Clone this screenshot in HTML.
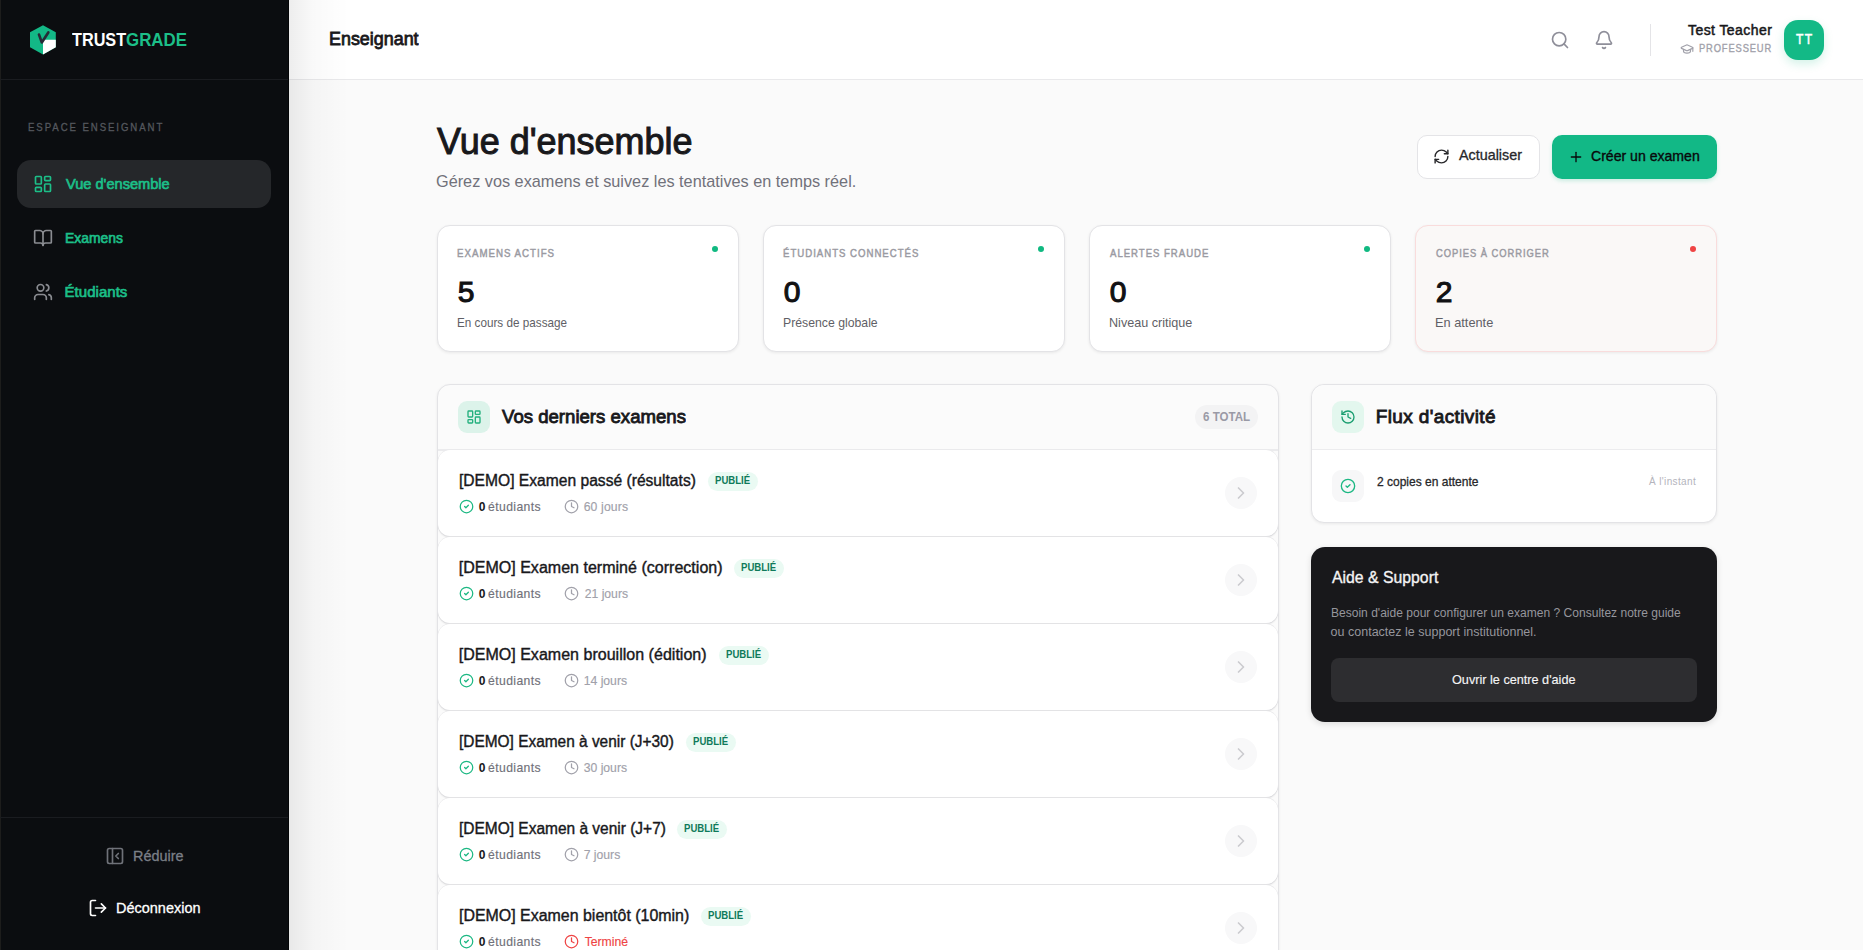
<!DOCTYPE html>
<html lang="fr"><head><meta charset="utf-8"><title>TrustGrade</title><style>*{box-sizing:border-box;margin:0;padding:0}
html,body{width:1863px;height:950px;overflow:hidden}
body{font-family:"Liberation Sans",sans-serif;background:#fafafa;position:relative}
.a{position:absolute}
svg{display:block;overflow:visible}
.t{position:absolute;white-space:nowrap;font-family:"Liberation Sans",sans-serif}
#side{position:absolute;left:0;top:0;width:289px;height:950px;background:#0b0d10}
.card{border:1px solid #e3e3e6;border-radius:13px;background:#fff;box-shadow:0 1px 3px rgba(0,0,0,0.07)}
.row{background:#fff;border-radius:12px;box-shadow:0 1px 0 #dcdcdf, 0 1.5px 1.5px rgba(0,0,0,0.06), 0 0 0 0.5px #e9e9eb}
</style></head>
<body>
<div id="side"></div>
<div class="a" style="left:0;top:0;width:1px;height:950px;background:#1d1d1c"></div>
<div class="a" style="left:0;top:79px;width:288px;height:1px;background:#1a1c20"></div>
<div class="a" style="left:0;top:817px;width:288px;height:1px;background:#1a1c20"></div>
<div class="a" style="left:288px;top:0;width:1px;height:950px;background:#040507"></div>
<svg class="a" style="left:29px;top:24px" width="28" height="32" viewBox="0 0 28 32">
<polygon points="14,1.2 26.8,8.2 26.8,23.2 14,30.5 1,23.2 1,8.2" fill="#13b886"/>
<polygon points="14,15.8 26.8,15.8 26.8,23.2 14,30.5" fill="#ffffff"/>
<path d="M10 10.6 L12.8 18.4 L19.3 8.5" stroke="#262b37" stroke-width="2.7" fill="none" stroke-linecap="round" stroke-linejoin="round"/>
</svg>
<div class="a" style="left:17px;top:160px;width:254px;height:48px;border-radius:14px;background:#25272a"></div>
<svg class="a" style="left:33px;top:174px" width="20" height="20" viewBox="0 0 24 24" fill="none" stroke="#1cbf88" stroke-width="2" stroke-linecap="round" stroke-linejoin="round"><rect width="7" height="9" x="3" y="3" rx="1"/><rect width="7" height="5" x="14" y="3" rx="1"/><rect width="7" height="9" x="14" y="12" rx="1"/><rect width="7" height="5" x="3" y="16" rx="1"/></svg>
<svg class="a" style="left:33px;top:228px" width="20" height="20" viewBox="0 0 24 24" fill="none" stroke="#8a8c91" stroke-width="2" stroke-linecap="round" stroke-linejoin="round"><path d="M12 7v14"/><path d="M3 18a1 1 0 0 1-1-1V4a1 1 0 0 1 1-1h5a4 4 0 0 1 4 4 4 4 0 0 1 4-4h5a1 1 0 0 1 1 1v13a1 1 0 0 1-1 1h-6a3 3 0 0 0-3 3 3 3 0 0 0-3-3z"/></svg>
<svg class="a" style="left:33px;top:282px" width="20" height="20" viewBox="0 0 24 24" fill="none" stroke="#8a8c91" stroke-width="2" stroke-linecap="round" stroke-linejoin="round"><path d="M16 21v-2a4 4 0 0 0-4-4H6a4 4 0 0 0-4 4v2"/><circle cx="9" cy="7" r="4"/><path d="M22 21v-2a4 4 0 0 0-3-3.87"/><path d="M16 3.13a4 4 0 0 1 0 7.75"/></svg>
<svg class="a" style="left:105px;top:846px" width="20" height="20" viewBox="0 0 24 24" fill="none" stroke="#6f7279" stroke-width="2" stroke-linecap="round" stroke-linejoin="round"><rect width="18" height="18" x="3" y="3" rx="2"/><path d="M9 3v18"/><path d="m16 15-3-3 3-3"/></svg>
<svg class="a" style="left:88px;top:898px" width="20" height="20" viewBox="0 0 24 24" fill="none" stroke="#ffffff" stroke-width="2" stroke-linecap="round" stroke-linejoin="round"><path d="M9 21H5a2 2 0 0 1-2-2V5a2 2 0 0 1 2-2h4"/><polyline points="16 17 21 12 16 7"/><line x1="21" x2="9" y1="12" y2="12"/></svg>
<div class="a" style="left:289px;top:0;width:1574px;height:79px;background:#fff"></div>
<div class="a" style="left:289px;top:79px;width:1574px;height:1px;background:#e9e9eb"></div>
<svg class="a" style="left:1550px;top:30px" width="20" height="20" viewBox="0 0 24 24" fill="none" stroke="#8e8e99" stroke-width="2" stroke-linecap="round" stroke-linejoin="round"><circle cx="11" cy="11" r="8"/><path d="m21 21-4.3-4.3"/></svg>
<svg class="a" style="left:1594px;top:30px" width="20" height="20" viewBox="0 0 24 24" fill="none" stroke="#8e8e99" stroke-width="2" stroke-linecap="round" stroke-linejoin="round"><path d="M10.268 21a2 2 0 0 0 3.464 0"/><path d="M3.262 15.326A1 1 0 0 0 4 17h16a1 1 0 0 0 .74-1.673C19.41 13.956 18 12.499 18 8A6 6 0 0 0 6 8c0 4.499-1.411 5.956-2.738 7.326"/></svg>
<div class="a" style="left:1650px;top:24px;width:1px;height:32px;background:#e4e4e7"></div>
<svg class="a" style="left:1679.5px;top:42px" width="14" height="14" viewBox="0 0 24 24" fill="none" stroke="#a1a1aa" stroke-width="2" stroke-linecap="round" stroke-linejoin="round"><path d="M21.42 10.922a1 1 0 0 0-.019-1.838L12.83 5.18a2 2 0 0 0-1.66 0L2.6 9.08a1 1 0 0 0 0 1.832l8.57 3.908a2 2 0 0 0 1.66 0z"/><path d="M22 10v6"/><path d="M6 12.5V16a6 3 0 0 0 12 0v-3.5"/></svg>
<div class="a" style="left:1784px;top:20px;width:40px;height:40px;border-radius:14px;background:#13b986;box-shadow:0 4px 10px rgba(16,185,129,0.18)"></div>
<div class="a" style="left:289px;top:0;width:60px;height:950px;background:linear-gradient(90deg,rgba(0,0,0,0.07),rgba(0,0,0,0.025) 40%,rgba(0,0,0,0))"></div>
<div class="a" style="left:1417px;top:135px;width:123px;height:44px;border-radius:10px;background:#fff;border:1px solid #e4e4e7"></div>
<svg class="a" style="left:1433px;top:148px" width="17" height="17" viewBox="0 0 24 24" fill="none" stroke="#27272a" stroke-width="2" stroke-linecap="round" stroke-linejoin="round"><path d="M3 12a9 9 0 0 1 9-9 9.75 9.75 0 0 1 6.74 2.74L21 8"/><path d="M21 3v5h-5"/><path d="M21 12a9 9 0 0 1-9 9 9.75 9.75 0 0 1-6.74-2.74L3 16"/><path d="M8 16H3v5"/></svg>
<div class="a" style="left:1552px;top:135px;width:165px;height:44px;border-radius:10px;background:#12b886;box-shadow:0 2px 4px rgba(16,185,129,0.2)"></div>
<svg class="a" style="left:1568px;top:149px" width="16" height="16" viewBox="0 0 24 24" fill="none" stroke="#09090b" stroke-width="2" stroke-linecap="round" stroke-linejoin="round"><path d="M5 12h14"/><path d="M12 5v14"/></svg>
<div class="a card" style="left:437px;top:225px;width:302px;height:127px"></div>
<div class="a" style="left:712px;top:246px;width:6px;height:6px;border-radius:50%;background:#10b981"></div>
<div class="a card" style="left:763px;top:225px;width:302px;height:127px"></div>
<div class="a" style="left:1038px;top:246px;width:6px;height:6px;border-radius:50%;background:#10b981"></div>
<div class="a card" style="left:1089px;top:225px;width:302px;height:127px"></div>
<div class="a" style="left:1364px;top:246px;width:6px;height:6px;border-radius:50%;background:#10b981"></div>
<div class="a card" style="left:1415px;top:225px;width:302px;height:127px;background:#faf8f7;border-color:#f9dcdc"></div>
<div class="a" style="left:1690px;top:246px;width:6px;height:6px;border-radius:50%;background:#ef4444"></div>
<div class="a card" style="left:437px;top:384px;width:842px;height:620px;background:#fbfbfb"></div>
<div class="a" style="left:438px;top:449px;width:840px;height:2px;background:#ebebed"></div>
<div class="a" style="left:458px;top:401px;width:32px;height:32px;border-radius:9px;background:#dcf3ea"></div>
<svg class="a" style="left:466px;top:409px" width="16" height="16" viewBox="0 0 24 24" fill="none" stroke="#22b07d" stroke-width="2" stroke-linecap="round" stroke-linejoin="round"><rect width="7" height="9" x="3" y="3" rx="1"/><rect width="7" height="5" x="14" y="3" rx="1"/><rect width="7" height="9" x="14" y="12" rx="1"/><rect width="7" height="5" x="3" y="16" rx="1"/></svg>
<div class="a" style="left:1195px;top:405px;width:63px;height:24px;border-radius:12px;background:#f3f3f4"></div>
<div class="a row" style="left:438px;top:450px;width:840px;height:86px"></div>
<div class="a" style="left:708px;top:472px;width:50px;height:19px;border-radius:10px;background:#eafaf3"></div>
<svg class="a" style="left:459px;top:499px" width="15" height="15" viewBox="0 0 24 24" fill="none" stroke="#1cb883" stroke-width="2" stroke-linecap="round" stroke-linejoin="round"><circle cx="12" cy="12" r="10"/><path d="m9 12 2 2 4-4"/></svg>
<svg class="a" style="left:564px;top:499px" width="15" height="15" viewBox="0 0 24 24" fill="none" stroke="#a1a1aa" stroke-width="2" stroke-linecap="round" stroke-linejoin="round"><circle cx="12" cy="12" r="10"/><polyline points="12 6 12 12 16 14"/></svg>
<div class="a" style="left:1225px;top:477px;width:32px;height:32px;border-radius:50%;background:#f8f8f9"></div>
<svg class="a" style="left:1231px;top:483px" width="20" height="20" viewBox="0 0 24 24" fill="none" stroke="#cbcbcf" stroke-width="2" stroke-linecap="round" stroke-linejoin="round"><path d="m9 18 6-6-6-6"/></svg>
<div class="a row" style="left:438px;top:537px;width:840px;height:86px"></div>
<div class="a" style="left:734px;top:559px;width:50px;height:19px;border-radius:10px;background:#eafaf3"></div>
<svg class="a" style="left:459px;top:586px" width="15" height="15" viewBox="0 0 24 24" fill="none" stroke="#1cb883" stroke-width="2" stroke-linecap="round" stroke-linejoin="round"><circle cx="12" cy="12" r="10"/><path d="m9 12 2 2 4-4"/></svg>
<svg class="a" style="left:564px;top:586px" width="15" height="15" viewBox="0 0 24 24" fill="none" stroke="#a1a1aa" stroke-width="2" stroke-linecap="round" stroke-linejoin="round"><circle cx="12" cy="12" r="10"/><polyline points="12 6 12 12 16 14"/></svg>
<div class="a" style="left:1225px;top:564px;width:32px;height:32px;border-radius:50%;background:#f8f8f9"></div>
<svg class="a" style="left:1231px;top:570px" width="20" height="20" viewBox="0 0 24 24" fill="none" stroke="#cbcbcf" stroke-width="2" stroke-linecap="round" stroke-linejoin="round"><path d="m9 18 6-6-6-6"/></svg>
<div class="a row" style="left:438px;top:624px;width:840px;height:86px"></div>
<div class="a" style="left:719px;top:646px;width:50px;height:19px;border-radius:10px;background:#eafaf3"></div>
<svg class="a" style="left:459px;top:673px" width="15" height="15" viewBox="0 0 24 24" fill="none" stroke="#1cb883" stroke-width="2" stroke-linecap="round" stroke-linejoin="round"><circle cx="12" cy="12" r="10"/><path d="m9 12 2 2 4-4"/></svg>
<svg class="a" style="left:564px;top:673px" width="15" height="15" viewBox="0 0 24 24" fill="none" stroke="#a1a1aa" stroke-width="2" stroke-linecap="round" stroke-linejoin="round"><circle cx="12" cy="12" r="10"/><polyline points="12 6 12 12 16 14"/></svg>
<div class="a" style="left:1225px;top:651px;width:32px;height:32px;border-radius:50%;background:#f8f8f9"></div>
<svg class="a" style="left:1231px;top:657px" width="20" height="20" viewBox="0 0 24 24" fill="none" stroke="#cbcbcf" stroke-width="2" stroke-linecap="round" stroke-linejoin="round"><path d="m9 18 6-6-6-6"/></svg>
<div class="a row" style="left:438px;top:711px;width:840px;height:86px"></div>
<div class="a" style="left:686px;top:733px;width:50px;height:19px;border-radius:10px;background:#eafaf3"></div>
<svg class="a" style="left:459px;top:760px" width="15" height="15" viewBox="0 0 24 24" fill="none" stroke="#1cb883" stroke-width="2" stroke-linecap="round" stroke-linejoin="round"><circle cx="12" cy="12" r="10"/><path d="m9 12 2 2 4-4"/></svg>
<svg class="a" style="left:564px;top:760px" width="15" height="15" viewBox="0 0 24 24" fill="none" stroke="#a1a1aa" stroke-width="2" stroke-linecap="round" stroke-linejoin="round"><circle cx="12" cy="12" r="10"/><polyline points="12 6 12 12 16 14"/></svg>
<div class="a" style="left:1225px;top:738px;width:32px;height:32px;border-radius:50%;background:#f8f8f9"></div>
<svg class="a" style="left:1231px;top:744px" width="20" height="20" viewBox="0 0 24 24" fill="none" stroke="#cbcbcf" stroke-width="2" stroke-linecap="round" stroke-linejoin="round"><path d="m9 18 6-6-6-6"/></svg>
<div class="a row" style="left:438px;top:798px;width:840px;height:86px"></div>
<div class="a" style="left:677px;top:820px;width:50px;height:19px;border-radius:10px;background:#eafaf3"></div>
<svg class="a" style="left:459px;top:847px" width="15" height="15" viewBox="0 0 24 24" fill="none" stroke="#1cb883" stroke-width="2" stroke-linecap="round" stroke-linejoin="round"><circle cx="12" cy="12" r="10"/><path d="m9 12 2 2 4-4"/></svg>
<svg class="a" style="left:564px;top:847px" width="15" height="15" viewBox="0 0 24 24" fill="none" stroke="#a1a1aa" stroke-width="2" stroke-linecap="round" stroke-linejoin="round"><circle cx="12" cy="12" r="10"/><polyline points="12 6 12 12 16 14"/></svg>
<div class="a" style="left:1225px;top:825px;width:32px;height:32px;border-radius:50%;background:#f8f8f9"></div>
<svg class="a" style="left:1231px;top:831px" width="20" height="20" viewBox="0 0 24 24" fill="none" stroke="#cbcbcf" stroke-width="2" stroke-linecap="round" stroke-linejoin="round"><path d="m9 18 6-6-6-6"/></svg>
<div class="a row" style="left:438px;top:885px;width:840px;height:86px"></div>
<div class="a" style="left:701px;top:907px;width:50px;height:19px;border-radius:10px;background:#eafaf3"></div>
<svg class="a" style="left:459px;top:934px" width="15" height="15" viewBox="0 0 24 24" fill="none" stroke="#1cb883" stroke-width="2" stroke-linecap="round" stroke-linejoin="round"><circle cx="12" cy="12" r="10"/><path d="m9 12 2 2 4-4"/></svg>
<svg class="a" style="left:564px;top:934px" width="15" height="15" viewBox="0 0 24 24" fill="none" stroke="#ef4444" stroke-width="2" stroke-linecap="round" stroke-linejoin="round"><circle cx="12" cy="12" r="10"/><polyline points="12 6 12 12 16 14"/></svg>
<div class="a" style="left:1225px;top:912px;width:32px;height:32px;border-radius:50%;background:#f8f8f9"></div>
<svg class="a" style="left:1231px;top:918px" width="20" height="20" viewBox="0 0 24 24" fill="none" stroke="#cbcbcf" stroke-width="2" stroke-linecap="round" stroke-linejoin="round"><path d="m9 18 6-6-6-6"/></svg>
<div class="a card" style="left:1311px;top:384px;width:406px;height:139px;background:#fff"></div>
<div class="a" style="left:1312px;top:385px;width:404px;height:64px;border-radius:13px 13px 0 0;background:#fbfbfb"></div>
<div class="a" style="left:1312px;top:449px;width:404px;height:1px;background:#ececee"></div>
<div class="a" style="left:1332px;top:401px;width:32px;height:32px;border-radius:9px;background:#e3f7ee"></div>
<svg class="a" style="left:1340px;top:409px" width="16" height="16" viewBox="0 0 24 24" fill="none" stroke="#1a9e70" stroke-width="2" stroke-linecap="round" stroke-linejoin="round"><path d="M3 12a9 9 0 1 0 9-9 9.75 9.75 0 0 0-6.74 2.74L3 8"/><path d="M3 3v5h5"/><path d="M12 7v5l4 2"/></svg>
<div class="a" style="left:1332px;top:470px;width:32px;height:32px;border-radius:9px;background:#f7f7f8"></div>
<svg class="a" style="left:1340px;top:478px" width="16" height="16" viewBox="0 0 24 24" fill="none" stroke="#1cb883" stroke-width="2" stroke-linecap="round" stroke-linejoin="round"><circle cx="12" cy="12" r="10"/><path d="m9 12 2 2 4-4"/></svg>
<div class="a" style="left:1311px;top:547px;width:406px;height:175px;border-radius:14px;background:#18181b;box-shadow:0 2px 6px rgba(0,0,0,0.12)"></div>
<div class="a" style="left:1331px;top:658px;width:366px;height:44px;border-radius:8px;background:#2d2d30"></div>
<div class="t" style="left:72.00px;top:29.85px;font-size:19px;line-height:19px;font-weight:bold;color:#ffffff;letter-spacing:0.000px;transform:scaleX(0.8540);transform-origin:0 0;">TRUST</div>
<div class="t" style="left:125.61px;top:29.85px;font-size:19px;line-height:19px;font-weight:bold;color:#1cbf88;letter-spacing:0.000px;transform:scaleX(0.8881);transform-origin:0 0;">GRADE</div>
<div class="t" style="left:28.13px;top:121.65px;font-size:11px;line-height:11px;font-weight:normal;color:#55585e;letter-spacing:2.200px;-webkit-text-stroke:0.3px #55585e;transform:scaleX(0.8747);transform-origin:0 0;">ESPACE ENSEIGNANT</div>
<div class="t" style="left:65.60px;top:176.25px;font-size:15px;line-height:15px;font-weight:normal;color:#1cbf88;letter-spacing:0.000px;-webkit-text-stroke:0.7px #1cbf88;transform:scaleX(0.9736);transform-origin:0 0;">Vue d&#x27;ensemble</div>
<div class="t" style="left:64.67px;top:230.25px;font-size:15px;line-height:15px;font-weight:normal;color:#1cbf88;letter-spacing:0.000px;-webkit-text-stroke:0.7px #1cbf88;transform:scaleX(0.9258);transform-origin:0 0;">Examens</div>
<div class="t" style="left:64.60px;top:283.75px;font-size:15px;line-height:15px;font-weight:normal;color:#1cbf88;letter-spacing:0.025px;-webkit-text-stroke:0.7px #1cbf88;">Étudiants</div>
<div class="t" style="left:133.04px;top:848.25px;font-size:15px;line-height:15px;font-weight:normal;color:#7b7f87;letter-spacing:0.000px;-webkit-text-stroke:0.3px #7b7f87;transform:scaleX(0.9608);transform-origin:0 0;">Réduire</div>
<div class="t" style="left:116.03px;top:900.25px;font-size:15px;line-height:15px;font-weight:normal;color:#ffffff;letter-spacing:0.000px;-webkit-text-stroke:0.3px #ffffff;transform:scaleX(0.9651);transform-origin:0 0;">Déconnexion</div>
<div class="t" style="left:329.03px;top:30.27px;font-size:18.5px;line-height:18.5px;font-weight:normal;color:#18181b;letter-spacing:0.000px;-webkit-text-stroke:0.8px #18181b;transform:scaleX(0.9674);transform-origin:0 0;">Enseignant</div>
<div class="t" style="left:1688.00px;top:22.70px;font-size:14px;line-height:14px;font-weight:normal;color:#18181b;letter-spacing:0.427px;-webkit-text-stroke:0.5px #18181b;">Test Teacher</div>
<div class="t" style="left:1699.13px;top:42.82px;font-size:10.8px;line-height:10.8px;font-weight:normal;color:#a1a1aa;letter-spacing:1.000px;-webkit-text-stroke:0.35px #a1a1aa;transform:scaleX(0.8659);transform-origin:0 0;">PROFESSEUR</div>
<div class="t" style="left:1796.00px;top:32.10px;font-size:14px;line-height:14px;font-weight:normal;color:#ffffff;letter-spacing:1.500px;-webkit-text-stroke:0.5px #ffffff;transform:scaleX(0.8649);transform-origin:0 0;">TT</div>
<div class="t" style="left:437.20px;top:123.90px;font-size:36px;line-height:36px;font-weight:normal;color:#18181b;letter-spacing:0.000px;-webkit-text-stroke:1.0px #18181b;transform:scaleX(0.9992);transform-origin:0 0;">Vue d&#x27;ensemble</div>
<div class="t" style="left:436.04px;top:172.55px;font-size:17px;line-height:17px;font-weight:normal;color:#71717a;letter-spacing:0.000px;transform:scaleX(0.9565);transform-origin:0 0;">Gérez vos examens et suivez les tentatives en temps réel.</div>
<div class="t" style="left:1459.00px;top:148.48px;font-size:14.5px;line-height:14.5px;font-weight:normal;color:#27272a;letter-spacing:0.000px;-webkit-text-stroke:0.3px #27272a;transform:scaleX(0.9891);transform-origin:0 0;">Actualiser</div>
<div class="t" style="left:1591.33px;top:148.68px;font-size:14.5px;line-height:14.5px;font-weight:normal;color:#09090b;letter-spacing:0.000px;-webkit-text-stroke:0.35px #09090b;transform:scaleX(0.9703);transform-origin:0 0;">Créer un examen</div>
<div class="t" style="left:457.10px;top:248.02px;font-size:10.8px;line-height:10.8px;font-weight:normal;color:#9a9aa2;letter-spacing:1.100px;-webkit-text-stroke:0.45px #9a9aa2;transform:scaleX(0.8993);transform-origin:0 0;">EXAMENS ACTIFS</div>
<div class="t" style="left:457.70px;top:277.10px;font-size:30px;line-height:30px;font-weight:normal;color:#111113;letter-spacing:0.000px;-webkit-text-stroke:1.1px #111113;">5</div>
<div class="t" style="left:457.10px;top:316.15px;font-size:13px;line-height:13px;font-weight:normal;color:#5f5f66;letter-spacing:0.000px;transform:scaleX(0.9008);transform-origin:0 0;">En cours de passage</div>
<div class="t" style="left:783.11px;top:248.02px;font-size:10.8px;line-height:10.8px;font-weight:normal;color:#9a9aa2;letter-spacing:1.100px;-webkit-text-stroke:0.45px #9a9aa2;transform:scaleX(0.8919);transform-origin:0 0;">ÉTUDIANTS CONNECTÉS</div>
<div class="t" style="left:783.70px;top:277.10px;font-size:30px;line-height:30px;font-weight:normal;color:#111113;letter-spacing:0.000px;-webkit-text-stroke:1.1px #111113;">0</div>
<div class="t" style="left:783.06px;top:316.15px;font-size:13px;line-height:13px;font-weight:normal;color:#5f5f66;letter-spacing:0.000px;transform:scaleX(0.9424);transform-origin:0 0;">Présence globale</div>
<div class="t" style="left:1110.00px;top:248.02px;font-size:10.8px;line-height:10.8px;font-weight:normal;color:#9a9aa2;letter-spacing:1.100px;-webkit-text-stroke:0.45px #9a9aa2;transform:scaleX(0.8885);transform-origin:0 0;">ALERTES FRAUDE</div>
<div class="t" style="left:1109.70px;top:277.10px;font-size:30px;line-height:30px;font-weight:normal;color:#111113;letter-spacing:0.000px;-webkit-text-stroke:1.1px #111113;">0</div>
<div class="t" style="left:1109.03px;top:316.15px;font-size:13px;line-height:13px;font-weight:normal;color:#5f5f66;letter-spacing:0.000px;transform:scaleX(0.9694);transform-origin:0 0;">Niveau critique</div>
<div class="t" style="left:1436.00px;top:248.02px;font-size:10.8px;line-height:10.8px;font-weight:normal;color:#9a9aa2;letter-spacing:1.100px;-webkit-text-stroke:0.45px #9a9aa2;transform:scaleX(0.8688);transform-origin:0 0;">COPIES À CORRIGER</div>
<div class="t" style="left:1435.70px;top:277.10px;font-size:30px;line-height:30px;font-weight:normal;color:#111113;letter-spacing:0.000px;-webkit-text-stroke:1.1px #111113;">2</div>
<div class="t" style="left:1435.02px;top:316.15px;font-size:13px;line-height:13px;font-weight:normal;color:#5f5f66;letter-spacing:0.000px;transform:scaleX(0.9828);transform-origin:0 0;">En attente</div>
<div class="t" style="left:502.00px;top:406.85px;font-size:19px;line-height:19px;font-weight:normal;color:#18181b;letter-spacing:0.000px;-webkit-text-stroke:0.85px #18181b;transform:scaleX(0.9787);transform-origin:0 0;">Vos derniers examens</div>
<div class="t" style="left:1202.80px;top:410.80px;font-size:12px;line-height:12px;font-weight:bold;color:#9a9aa6;letter-spacing:0.000px;transform:scaleX(0.9633);transform-origin:0 0;">6 TOTAL</div>
<div class="t" style="left:458.72px;top:473.40px;font-size:16px;line-height:16px;font-weight:normal;color:#18181b;letter-spacing:0.000px;-webkit-text-stroke:0.4px #18181b;transform:scaleX(0.9759);transform-origin:0 0;">[DEMO] Examen passé (résultats)</div>
<div class="t" style="left:715.09px;top:475.07px;font-size:10.5px;line-height:10.5px;font-weight:bold;color:#0f7a5a;letter-spacing:0.000px;transform:scaleX(0.9135);transform-origin:0 0;">PUBLIÉ</div>
<div class="t" style="left:478.80px;top:501.00px;font-size:12px;line-height:12px;font-weight:bold;color:#18181b;letter-spacing:0.000px;">0</div>
<div class="t" style="left:488.00px;top:500.83px;font-size:12.2px;line-height:12.2px;font-weight:normal;color:#71717a;letter-spacing:0.400px;-webkit-text-stroke:0.15px #71717a;">étudiants</div>
<div class="t" style="left:583.70px;top:500.83px;font-size:12.2px;line-height:12.2px;font-weight:normal;color:#a1a1aa;letter-spacing:0.143px;-webkit-text-stroke:0.15px #a1a1aa;">60 jours</div>
<div class="t" style="left:458.70px;top:560.40px;font-size:16px;line-height:16px;font-weight:normal;color:#18181b;letter-spacing:0.021px;-webkit-text-stroke:0.4px #18181b;">[DEMO] Examen terminé (correction)</div>
<div class="t" style="left:741.09px;top:562.08px;font-size:10.5px;line-height:10.5px;font-weight:bold;color:#0f7a5a;letter-spacing:0.000px;transform:scaleX(0.9135);transform-origin:0 0;">PUBLIÉ</div>
<div class="t" style="left:478.80px;top:588.00px;font-size:12px;line-height:12px;font-weight:bold;color:#18181b;letter-spacing:0.000px;">0</div>
<div class="t" style="left:488.00px;top:587.83px;font-size:12.2px;line-height:12.2px;font-weight:normal;color:#71717a;letter-spacing:0.400px;-webkit-text-stroke:0.15px #71717a;">étudiants</div>
<div class="t" style="left:584.70px;top:587.83px;font-size:12.2px;line-height:12.2px;font-weight:normal;color:#a1a1aa;letter-spacing:0.000px;-webkit-text-stroke:0.15px #a1a1aa;">21 jours</div>
<div class="t" style="left:458.70px;top:647.40px;font-size:16px;line-height:16px;font-weight:normal;color:#18181b;letter-spacing:0.022px;-webkit-text-stroke:0.4px #18181b;">[DEMO] Examen brouillon (édition)</div>
<div class="t" style="left:726.09px;top:649.08px;font-size:10.5px;line-height:10.5px;font-weight:bold;color:#0f7a5a;letter-spacing:0.000px;transform:scaleX(0.9135);transform-origin:0 0;">PUBLIÉ</div>
<div class="t" style="left:478.80px;top:675.00px;font-size:12px;line-height:12px;font-weight:bold;color:#18181b;letter-spacing:0.000px;">0</div>
<div class="t" style="left:488.00px;top:674.83px;font-size:12.2px;line-height:12.2px;font-weight:normal;color:#71717a;letter-spacing:0.400px;-webkit-text-stroke:0.15px #71717a;">étudiants</div>
<div class="t" style="left:583.70px;top:674.83px;font-size:12.2px;line-height:12.2px;font-weight:normal;color:#a1a1aa;letter-spacing:0.000px;-webkit-text-stroke:0.15px #a1a1aa;">14 jours</div>
<div class="t" style="left:458.74px;top:734.40px;font-size:16px;line-height:16px;font-weight:normal;color:#18181b;letter-spacing:0.000px;-webkit-text-stroke:0.4px #18181b;transform:scaleX(0.9643);transform-origin:0 0;">[DEMO] Examen à venir (J+30)</div>
<div class="t" style="left:693.09px;top:736.08px;font-size:10.5px;line-height:10.5px;font-weight:bold;color:#0f7a5a;letter-spacing:0.000px;transform:scaleX(0.9135);transform-origin:0 0;">PUBLIÉ</div>
<div class="t" style="left:478.80px;top:762.00px;font-size:12px;line-height:12px;font-weight:bold;color:#18181b;letter-spacing:0.000px;">0</div>
<div class="t" style="left:488.00px;top:761.83px;font-size:12.2px;line-height:12.2px;font-weight:normal;color:#71717a;letter-spacing:0.400px;-webkit-text-stroke:0.15px #71717a;">étudiants</div>
<div class="t" style="left:583.70px;top:761.83px;font-size:12.2px;line-height:12.2px;font-weight:normal;color:#a1a1aa;letter-spacing:0.000px;-webkit-text-stroke:0.15px #a1a1aa;">30 jours</div>
<div class="t" style="left:458.73px;top:821.40px;font-size:16px;line-height:16px;font-weight:normal;color:#18181b;letter-spacing:0.000px;-webkit-text-stroke:0.4px #18181b;transform:scaleX(0.9675);transform-origin:0 0;">[DEMO] Examen à venir (J+7)</div>
<div class="t" style="left:684.09px;top:823.08px;font-size:10.5px;line-height:10.5px;font-weight:bold;color:#0f7a5a;letter-spacing:0.000px;transform:scaleX(0.9135);transform-origin:0 0;">PUBLIÉ</div>
<div class="t" style="left:478.80px;top:849.00px;font-size:12px;line-height:12px;font-weight:bold;color:#18181b;letter-spacing:0.000px;">0</div>
<div class="t" style="left:488.00px;top:848.83px;font-size:12.2px;line-height:12.2px;font-weight:normal;color:#71717a;letter-spacing:0.400px;-webkit-text-stroke:0.15px #71717a;">étudiants</div>
<div class="t" style="left:583.70px;top:848.83px;font-size:12.2px;line-height:12.2px;font-weight:normal;color:#a1a1aa;letter-spacing:0.000px;-webkit-text-stroke:0.15px #a1a1aa;">7 jours</div>
<div class="t" style="left:458.70px;top:908.40px;font-size:16px;line-height:16px;font-weight:normal;color:#18181b;letter-spacing:0.000px;-webkit-text-stroke:0.4px #18181b;transform:scaleX(0.9961);transform-origin:0 0;">[DEMO] Examen bientôt (10min)</div>
<div class="t" style="left:708.09px;top:910.08px;font-size:10.5px;line-height:10.5px;font-weight:bold;color:#0f7a5a;letter-spacing:0.000px;transform:scaleX(0.9135);transform-origin:0 0;">PUBLIÉ</div>
<div class="t" style="left:478.80px;top:936.00px;font-size:12px;line-height:12px;font-weight:bold;color:#18181b;letter-spacing:0.000px;">0</div>
<div class="t" style="left:488.00px;top:935.83px;font-size:12.2px;line-height:12.2px;font-weight:normal;color:#71717a;letter-spacing:0.400px;-webkit-text-stroke:0.15px #71717a;">étudiants</div>
<div class="t" style="left:584.70px;top:935.83px;font-size:12.2px;line-height:12.2px;font-weight:normal;color:#ef4444;letter-spacing:0.000px;-webkit-text-stroke:0.15px #ef4444;">Terminé</div>
<div class="t" style="left:1375.70px;top:406.85px;font-size:19px;line-height:19px;font-weight:normal;color:#18181b;letter-spacing:0.379px;-webkit-text-stroke:0.85px #18181b;">Flux d&#x27;activité</div>
<div class="t" style="left:1376.70px;top:474.95px;font-size:13px;line-height:13px;font-weight:normal;color:#27272a;letter-spacing:0.000px;-webkit-text-stroke:0.3px #27272a;transform:scaleX(0.9236);transform-origin:0 0;">2 copies en attente</div>
<div class="t" style="left:1649.00px;top:477.20px;font-size:10px;line-height:10px;font-weight:normal;color:#b4b4bc;letter-spacing:0.370px;">À l&#x27;instant</div>
<div class="t" style="left:1331.60px;top:568.55px;font-size:17px;line-height:17px;font-weight:normal;color:#f4f4f5;letter-spacing:0.000px;-webkit-text-stroke:0.35px #f4f4f5;transform:scaleX(0.9296);transform-origin:0 0;">Aide &amp; Support</div>
<div class="t" style="left:1330.64px;top:607.17px;font-size:12.5px;line-height:12.5px;font-weight:normal;color:#96969d;letter-spacing:0.000px;transform:scaleX(0.9633);transform-origin:0 0;">Besoin d&#x27;aide pour configurer un examen ? Consultez notre guide</div>
<div class="t" style="left:1330.60px;top:626.17px;font-size:12.5px;line-height:12.5px;font-weight:normal;color:#96969d;letter-spacing:0.008px;">ou contactez le support institutionnel.</div>
<div class="t" style="left:1451.83px;top:673.45px;font-size:13px;line-height:13px;font-weight:normal;color:#f4f4f5;letter-spacing:0.000px;-webkit-text-stroke:0.15px #f4f4f5;transform:scaleX(0.9744);transform-origin:0 0;">Ouvrir le centre d&#x27;aide</div>
</body></html>
